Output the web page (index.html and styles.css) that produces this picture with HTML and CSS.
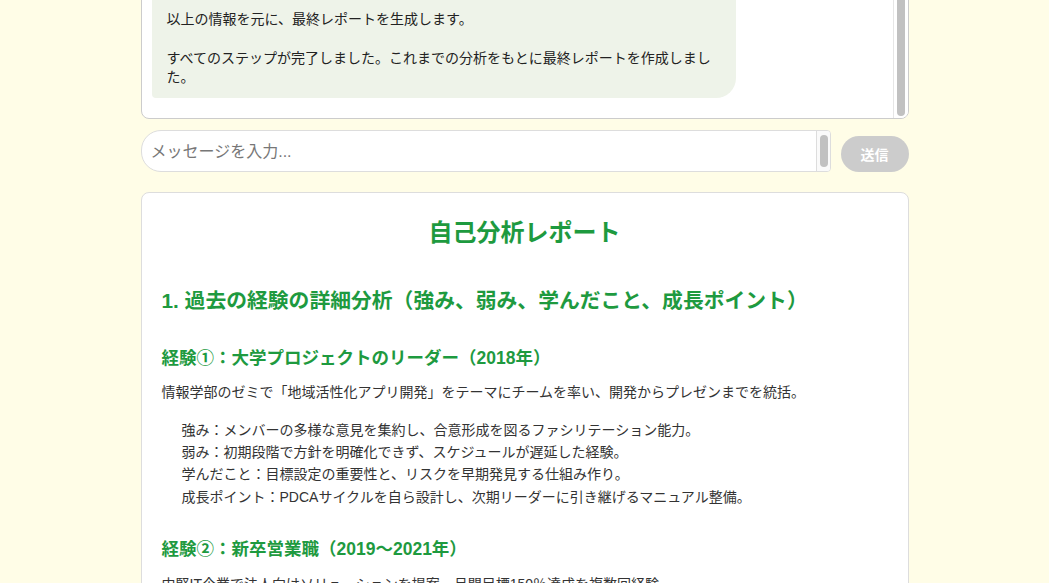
FILE: index.html
```html
<!DOCTYPE html>
<html lang="ja">
<head>
    <meta charset="UTF-8">
    <meta name="viewport" content="width=device-width, initial-scale=1.0">
    <title>自己分析チャット</title>
    <link rel="stylesheet" href="styles.css">
</head>
<body>
    <div class="app">
        <div class="chat-box">
            <div class="chat-scroll">
                <div class="chat-log">
                    <div class="msg msg-user">はい、お願いします。</div>
                    <div class="msg msg-bot">ステップ4：キャリアの方向性を整理しました。

次に、これまでの回答をまとめます。

以上の情報を元に、最終レポートを生成します。

すべてのステップが完了しました。これまでの分析をもとに最終レポートを作成しました。</div>
                </div>
            </div>
            <div class="scroll-track">
                <div class="scroll-thumb chat-thumb"></div>
            </div>
        </div>

        <div class="input-row">
            <div class="input-wrap">
                <textarea class="msg-input" rows="1" placeholder="メッセージを入力..."></textarea>
                <div class="scroll-track input-track">
                    <div class="scroll-thumb input-thumb"></div>
                </div>
            </div>
            <button class="send-btn" disabled>送信</button>
        </div>

        <div class="report">
            <h1 class="report-title">自己分析レポート</h1>

            <h2>1. 過去の経験の詳細分析（強み、弱み、学んだこと、成長ポイント）</h2>

            <h3>経験①：大学プロジェクトのリーダー（2018年）</h3>
            <p>情報学部のゼミで「地域活性化アプリ開発」をテーマにチームを率い、開発からプレゼンまでを統括。</p>
            <ul>
                <li>強み：メンバーの多様な意見を集約し、合意形成を図るファシリテーション能力。</li>
                <li>弱み：初期段階で方針を明確化できず、スケジュールが遅延した経験。</li>
                <li>学んだこと：目標設定の重要性と、リスクを早期発見する仕組み作り。</li>
                <li>成長ポイント：PDCAサイクルを自ら設計し、次期リーダーに引き継げるマニュアル整備。</li>
            </ul>

            <h3>経験②：新卒営業職（2019〜2021年）</h3>
            <p>中堅IT企業で法人向けソリューションを提案。月間目標150％達成を複数回経験。</p>
            <ul>
                <li>強み：顧客の課題を丁寧にヒアリングし、最適な提案に落とし込む力。</li>
                <li>弱み：業務を抱え込みがちで、周囲への相談が遅れる傾向。</li>
            </ul>
        </div>
    </div>
</body>
</html>
```

FILE: styles.css
```css
body {
    margin: 0;
    background-color: #fffde7;
    color: #333;
    font-family: "Liberation Sans", "Noto Sans CJK JP", sans-serif;
    font-size: 14px;
}

.app {
    width: 768px;
    margin: -241px auto 40px;
}

/* chat log */
.chat-box {
    height: 360px;
    box-sizing: border-box;
    background: #fff;
    border: 1px solid #ccc;
    border-radius: 8px;
    display: flex;
    overflow: hidden;
}

.chat-scroll {
    flex: 1;
    padding: 10px;
    overflow: hidden;
    display: flex;
    flex-direction: column-reverse;
}

.chat-log {
    flex-shrink: 0;
}

.msg {
    max-width: 80%;
    box-sizing: border-box;
    padding: 10px 15px;
    margin-bottom: 10px;
    line-height: 1.4;
    white-space: pre-wrap;
    color: #222;
}

.msg-bot {
    background: #eef3e9;
    border-radius: 20px 20px 20px 4px;
}

.msg-user {
    margin-left: auto;
    width: fit-content;
    background: #dcefd9;
    border-radius: 20px 20px 4px 20px;
}

/* drawn scrollbars */
.scroll-track {
    width: 15px;
    flex-shrink: 0;
    box-sizing: border-box;
    background: #fff;
    border-left: 1px solid #e6e6e6;
    display: flex;
    flex-direction: column;
    justify-content: flex-end;
    padding: 2px 3px 2px 3px;
}

.scroll-thumb {
    background: #c1c1c1;
    border-radius: 4px;
}

.chat-thumb {
    height: 200px;
}

/* input */
.input-row {
    display: flex;
    align-items: flex-end;
    gap: 10px;
    margin-top: 11px;
}

.input-wrap {
    flex: 1;
    height: 42px;
    box-sizing: border-box;
    display: flex;
    background: #fff;
    border: 1px solid #ddd;
    border-radius: 20px 4px 4px 20px;
    overflow: hidden;
}

.msg-input {
    flex: 1;
    padding: 10px 9px 8px;
    border: none;
    background: transparent;
    font-family: inherit;
    font-size: 16px;
    line-height: 22px;
    resize: none;
    overflow: hidden;
    outline: none;
}

.msg-input::placeholder {
    color: #777;
}

.input-track {
    width: 14px;
    background: #fafafa;
    border-left-color: #ddd;
    padding: 2px 2px 4px 3px;
}

.input-thumb {
    height: 32px;
}

.send-btn {
    height: 36px;
    padding: 0 20px;
    border: none;
    border-radius: 18px;
    background: #ccc;
    color: #fff;
    font-family: inherit;
    font-size: 14px;
    font-weight: bold;
}

/* report */
.report {
    margin-top: 20px;
    background: #fff;
    border: 1px solid #ddd;
    border-radius: 8px;
    padding: 23px 20px 20px;
    line-height: 1.6;
}

.report-title {
    margin: 0 0 36px;
    text-align: center;
    color: #1e9a3f;
    font-size: 24px;
    line-height: 1.4;
}

.report h2 {
    margin: 0;
    color: #1e9a3f;
    font-size: 20.8px;
    line-height: 1.4;
}

.report h3 {
    margin: 31px 0 11px;
    color: #1e9a3f;
    font-size: 17.5px;
    line-height: 1.4;
}

.report ul + h3 {
    margin-top: 29px;
}

.report p {
    margin: 0;
}

.report ul {
    list-style: none;
    margin: 15px 0 0;
    padding-left: 20px;
}
```
